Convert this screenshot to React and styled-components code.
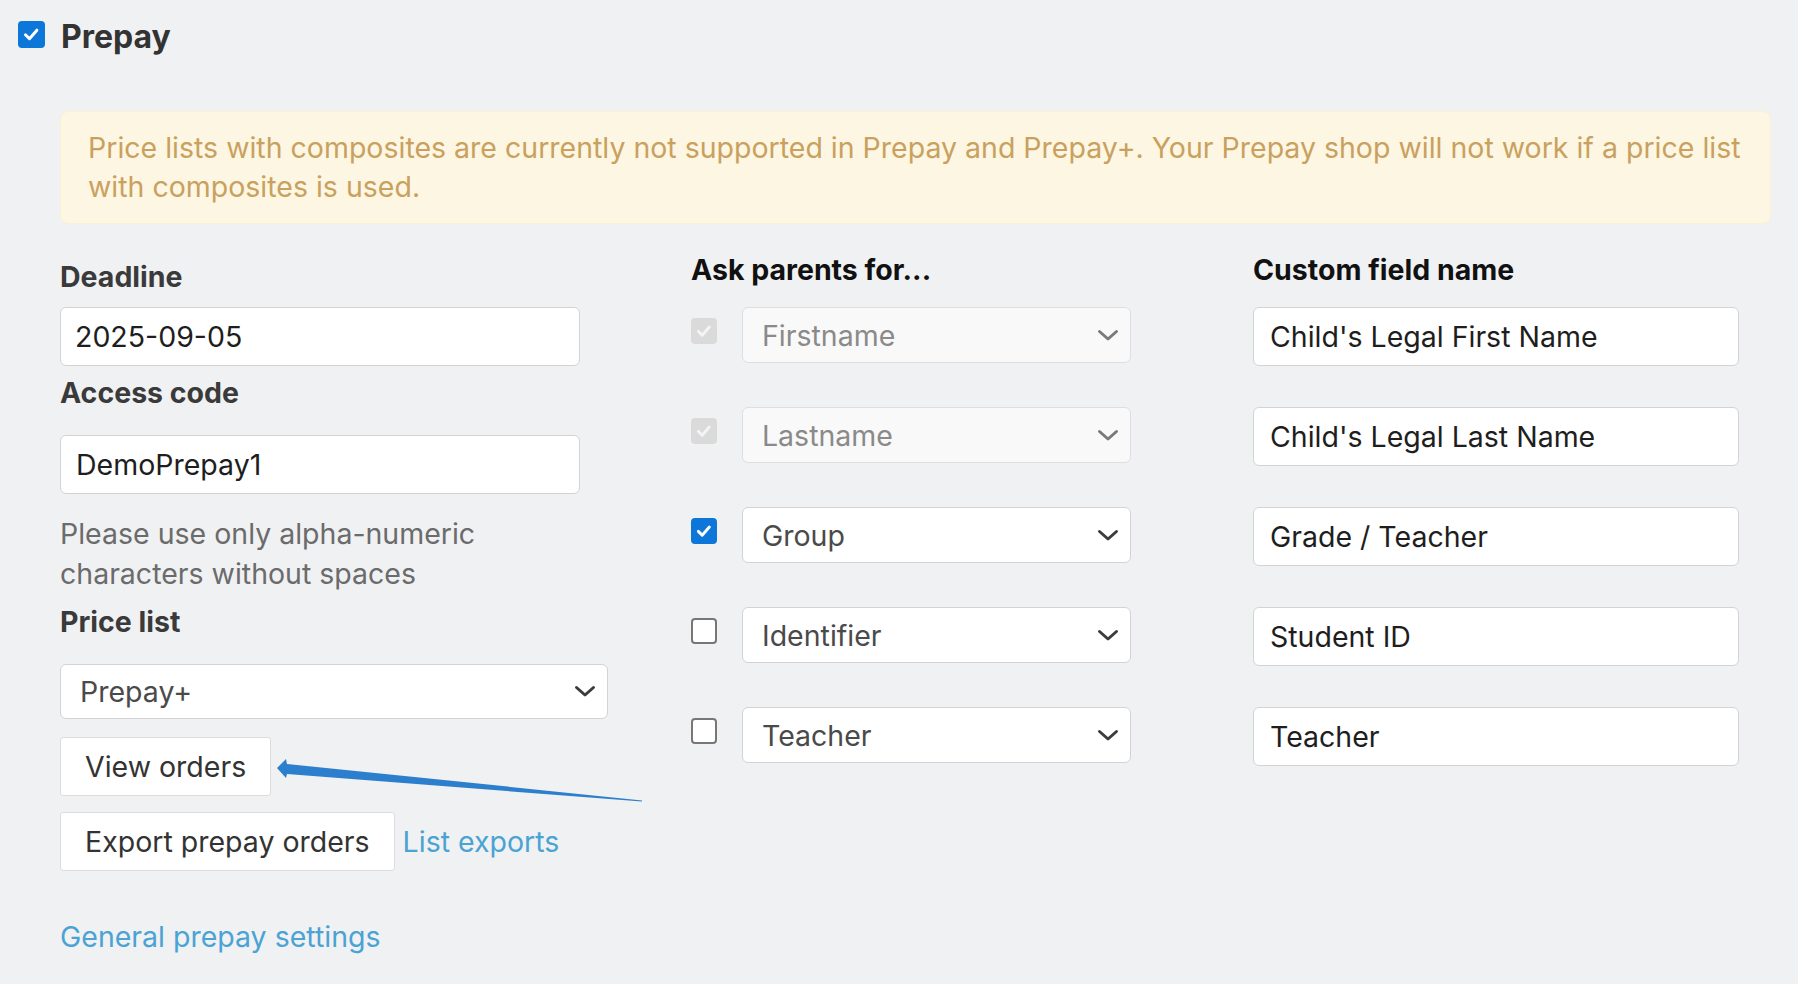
import React from "react";
import styled, { createGlobalStyle } from "styled-components";

const GlobalStyle = createGlobalStyle`
  html, body {
    margin: 0;
    padding: 0;
    background: #f0f1f3;
  }
  body {
    font-family: Inter, "Noto Sans", sans-serif;
    color: #222;
  }
`;

const Page = styled.div`
  position: relative;
  width: 1798px;
  height: 984px;
  box-sizing: border-box;
  padding: 21px 27px 0 18px;
  overflow: hidden;
`;

const TitleRow = styled.div`
  display: flex;
  align-items: center;
  gap: 16px;
  height: 27px;
`;

const Title = styled.h2`
  margin: 0;
  padding-top: 4px;
  font-size: 32px;
  font-weight: 700;
  color: #333;
  line-height: 27px;
`;

const Section = styled.div`
  padding-left: 42px;
`;

const Alert = styled.div`
  margin-top: 63px;
  background: #fdf6e2;
  border: 1px solid #fbf0d3;
  border-radius: 8px;
  padding: 16px 27px 17px;
  color: #c9a15f;
  font-size: 28.5px;
  line-height: 39px;
`;

const Main = styled.div`
  display: flex;
  margin-top: 29px;
`;

const LeftColumn = styled.div`
  width: 631px;
  padding-top: 7px;
  display: flex;
  flex-direction: column;
  align-items: flex-start;
`;

const Label = styled.label`
  display: block;
  font-size: 28.5px;
  font-weight: 700;
  line-height: 34px;
  color: #3a3a3a;
  margin-top: ${(p) => p.$top || 0}px;
  margin-bottom: ${(p) => p.$bottom || 0}px;
`;

const TextInput = styled.div`
  box-sizing: border-box;
  width: ${(p) => p.$width}px;
  height: 59px;
  display: flex;
  align-items: center;
  padding: 0 ${(p) => p.$pad || 14}px;
  background: #fff;
  border: 1px solid #d3d3d3;
  border-radius: 6px;
  font-size: 28.5px;
  color: #1e1e1e;
  margin-top: ${(p) => p.$top || 0}px;
`;

const Help = styled.p`
  margin: 20px 0 0;
  font-size: 28.5px;
  line-height: 40px;
  color: #6b6b6b;
  width: 530px;
`;

const SelectBox = styled.div`
  box-sizing: border-box;
  width: ${(p) => p.$width}px;
  height: ${(p) => p.$height || 55}px;
  display: flex;
  align-items: center;
  justify-content: space-between;
  padding: 0 11px 0 19px;
  background: ${(p) => (p.$disabled ? "#f9f9f9" : "#fff")};
  border: 1px solid ${(p) => (p.$disabled ? "#dedede" : "#d3d3d3")};
  border-radius: 6px;
  font-size: 28.5px;
  color: ${(p) => (p.$disabled ? "#8a8a8a" : "#4a4a4a")};
  margin-top: ${(p) => p.$top || 0}px;
`;

const Button = styled.button`
  box-sizing: border-box;
  height: 59px;
  padding: 0 24px;
  background: #fff;
  border: 1px solid #dcdcdc;
  border-radius: 3px;
  font-family: inherit;
  font-size: 28.5px;
  color: #333;
  cursor: pointer;
`;

const ButtonRow = styled.div`
  display: flex;
  align-items: center;
  gap: 8px;
  margin-top: ${(p) => p.$top || 0}px;
`;

const Link = styled.a`
  font-size: 28.5px;
  color: #4aa3d3;
  text-decoration: none;
  cursor: pointer;
`;

const BottomLink = styled(Link)`
  display: block;
  margin-top: 49px;
  line-height: 34px;
`;

const FieldsTable = styled.div`
  display: grid;
  grid-template-columns: 562px 486px;
  grid-auto-rows: 100px;
  grid-template-rows: 54px;
`;

const HeadCell = styled.div`
  font-size: 28.5px;
  font-weight: 700;
  line-height: 34px;
  color: #111;
`;

const FieldCell = styled.div`
  display: flex;
  align-items: flex-start;
  gap: 25px;
`;

const Box = styled.span`
  box-sizing: border-box;
  flex: 0 0 auto;
  width: ${(p) => p.$size}px;
  height: ${(p) => p.$size}px;
  margin-top: ${(p) => p.$top || 0}px;
  border-radius: 4px;
  display: flex;
  align-items: center;
  justify-content: center;
  background: ${(p) =>
    p.$state === "on" ? "#0c76d9" : p.$state === "locked" ? "#dadada" : "#fff"};
  border: ${(p) => (p.$state === "off" ? "2px solid #777" : "none")};
`;

const Arrow = styled.svg`
  position: absolute;
  left: 270px;
  top: 750px;
`;

const Check = ({ state, top, size = 26 }) => (
  <Box $state={state} $top={top} $size={size}>
    {state !== "off" && (
      <svg width={size * 0.68} height={size * 0.68} viewBox="0 0 16 16">
        <path
          d="M3 8.5 L6.5 12 L13 4.5"
          fill="none"
          stroke={state === "locked" ? "#f4f4f4" : "#fff"}
          strokeWidth="2.6"
          strokeLinecap="round"
          strokeLinejoin="round"
        />
      </svg>
    )}
  </Box>
);

const Chevron = ({ color }) => (
  <svg width="22" height="13" viewBox="0 0 22 13">
    <path
      d="M2.5 2.5 L11 10 L19.5 2.5"
      fill="none"
      stroke={color}
      strokeWidth="3"
      strokeLinecap="round"
      strokeLinejoin="round"
    />
  </svg>
);

const fields = [
  { name: "Firstname", state: "locked", custom: "Child's Legal First Name" },
  { name: "Lastname", state: "locked", custom: "Child's Legal Last Name" },
  { name: "Group", state: "on", custom: "Grade / Teacher" },
  { name: "Identifier", state: "off", custom: "Student ID" },
  { name: "Teacher", state: "off", custom: "Teacher" },
];

const App = () => {
  return (
    <Page>
      <GlobalStyle />
      <TitleRow>
        <Check state="on" size={27} />
        <Title>Prepay</Title>
      </TitleRow>
      <Section>
        <Alert>
          Price lists with composites are currently not supported in Prepay and
          Prepay+. Your Prepay shop will not work if a price list with
          composites is used.
        </Alert>
        <Main>
          <LeftColumn>
            <Label>Deadline</Label>
            <TextInput $width={520} $top={13}>2025-09-05</TextInput>
            <Label $top={10}>Access code</Label>
            <TextInput $width={520} $top={25} $pad={15}>DemoPrepay1</TextInput>
            <Help>
              Please use only alpha-numeric characters without spaces
            </Help>
            <Label $top={11}>Price list</Label>
            <SelectBox $width={548} $top={25}>
              <span>Prepay+</span>
              <Chevron color="#3c3c3c" />
            </SelectBox>
            <ButtonRow $top={18}>
              <Button>View orders</Button>
            </ButtonRow>
            <ButtonRow $top={16}>
              <Button>Export prepay orders</Button>
              <Link>List exports</Link>
            </ButtonRow>
            <BottomLink>General prepay settings</BottomLink>
          </LeftColumn>
          <FieldsTable>
            <HeadCell>Ask parents for...</HeadCell>
            <HeadCell>Custom field name</HeadCell>
            {fields.map((f) => (
              <React.Fragment key={f.name}>
                <FieldCell>
                  <Check state={f.state} top={11} />
                  <SelectBox $width={389} $height={56} $disabled={f.state === "locked"}>
                    <span>{f.name}</span>
                    <Chevron color={f.state === "locked" ? "#7a7a7a" : "#3c3c3c"} />
                  </SelectBox>
                </FieldCell>
                <FieldCell>
                  <TextInput $width={486} $pad={16}>{f.custom}</TextInput>
                </FieldCell>
              </React.Fragment>
            ))}
          </FieldsTable>
        </Main>
      </Section>
      <Arrow width="380" height="60" viewBox="270 750 380 60">
        <polygon
          points="277,768 286,759 287,764 642,800.4 642,801.6 287,774 286,778"
          fill="#2c7fcc"
        />
      </Arrow>
    </Page>
  );
};

export default App;
